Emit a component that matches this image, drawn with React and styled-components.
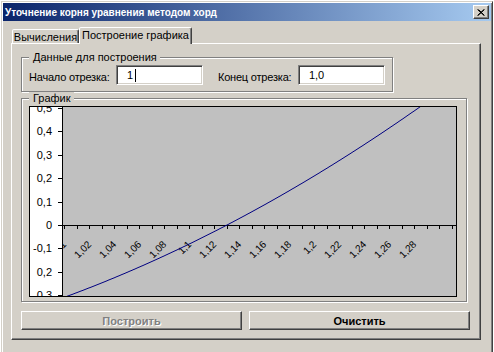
import React from "react";
import styled, { createGlobalStyle } from "styled-components";

const GlobalStyle = createGlobalStyle`
  html, body {
    margin: 0;
    padding: 0;
    background: #ffffff;
    overflow: hidden;
    font-family: "Liberation Sans", Arial, sans-serif;
    font-size: 11px;
  }
`;

const Window = styled.div`
  margin: 1px 0 0 1px;
  width: 492px;
  height: 351px;
  box-sizing: border-box;
  background: #d4d0c8;
  border: 1px solid;
  border-bottom: none;
  border-color: #d4d0c8 #404040 #404040 #d4d0c8;
  box-shadow: inset 1px 1px 0 #fff, inset -1px 0 0 #808080;
  padding: 1px 1px 0 1px;
  display: flex;
  flex-direction: column;
`;

const TitleBar = styled.div`
  height: 18px;
  display: flex;
  align-items: center;
  padding: 0 2px 0 2px;
  background: linear-gradient(to right, #0a246a, #a6caf0);
  color: #fff;
  font-weight: bold;
  font-size: 10px;
`;

const TitleText = styled.span`
  flex: 1;
  white-space: nowrap;
`;

const CloseButton = styled.div`
  width: 16px;
  height: 14px;
  box-sizing: border-box;
  background: #d4d0c8;
  border: 1px solid;
  border-color: #fff #404040 #404040 #fff;
  box-shadow: inset -1px -1px 0 #808080;
  display: flex;
  align-items: center;
  justify-content: center;
`;

const Body = styled.div`
  padding: 6px 0 0 8px;
`;

const TabRow = styled.div`
  display: flex;
  align-items: flex-end;
  height: 16px;
  padding-left: 1px;
`;

const Tab = styled.div`
  position: relative;
  z-index: ${p => (p.$active ? 2 : 1)};
  width: ${p => p.$w}px;
  height: ${p => (p.$active ? 17 : 14)}px;
  margin-bottom: ${p => (p.$active ? -1 : 0)}px;
  box-sizing: border-box;
  background: #d4d0c8;
  border: 1px solid;
  border-bottom: none;
  border-color: #fff #404040 transparent #fff;
  border-radius: 2px 2px 0 0;
  box-shadow: inset -1px 0 0 #808080;
  display: flex;
  align-items: center;
  justify-content: center;
  padding-bottom: ${p => (p.$active ? 3 : 0)}px;
  color: #000;
  white-space: nowrap;
`;

const Panel = styled.div`
  width: 470px;
  height: 297px;
  box-sizing: border-box;
  border: 1px solid;
  border-color: #fff #404040 #404040 #fff;
  box-shadow: inset -1px -1px 0 #808080;
  padding: 13px 0 0 9px;
  display: flex;
  flex-direction: column;
`;

const Group = styled.div`
  width: ${p => p.$w}px;
  height: ${p => p.$h}px;
  margin-top: ${p => p.$mt || 0}px;
  box-sizing: border-box;
  border: 1px solid #808080;
  box-shadow: inset 1px 1px 0 #fff, 1px 1px 0 #fff;
  padding: 0 7px;
  display: flex;
  flex-direction: column;
`;

const Legend = styled.span`
  align-self: flex-start;
  margin-top: -7px;
  padding: 0 3px 0 4px;
  line-height: 13px;
  background: #d4d0c8;
  color: #000;
`;

const FieldRow = styled.div`
  display: flex;
  align-items: center;
  height: 20px;
  margin-top: 1px;
`;

const FieldLabel = styled.span`
  width: ${p => p.$w}px;
  padding-top: 3px;
  white-space: nowrap;
  letter-spacing: -0.2px;
`;

const Field = styled.div`
  width: 88px;
  height: 20px;
  box-sizing: border-box;
  margin-right: ${p => p.$mr || 0}px;
  background: #fff;
  border: 1px solid;
  border-color: #808080 #fff #fff #808080;
  box-shadow: inset 1px 1px 0 #404040, inset -1px -1px 0 #d4d0c8;
  padding: 0 0 0 10px;
  display: flex;
  align-items: center;
`;

const Caret = styled.span`
  width: 1px;
  height: 13px;
  margin-left: 2px;
  background: #000;
`;

const ChartBox = styled.div`
  margin-top: 1px;
  width: 428px;
  height: 191px;
`;

const ButtonRow = styled.div`
  display: flex;
  gap: 7px;
  margin-top: 9px;
`;

const Button = styled.div`
  width: 221px;
  height: 19px;
  box-sizing: border-box;
  background: #d4d0c8;
  border: 1px solid;
  border-color: #fff #404040 #404040 #fff;
  box-shadow: inset -1px -1px 0 #808080;
  display: flex;
  align-items: center;
  justify-content: center;
  font-weight: bold;
  color: ${p => (p.$disabled ? "#808080" : "#000")};
  text-shadow: ${p => (p.$disabled ? "1px 1px 0 #fff" : "none")};
`;

const yTicks = [
  [0.5, "0,5"],
  [0.4, "0,4"],
  [0.3, "0,3"],
  [0.2, "0,2"],
  [0.1, "0,1"],
  [0, "0"],
  [-0.1, "-0,1"],
  [-0.2, "0,2"],
  [-0.3, "0,3"],
];

function Chart() {
  const axisY = 119;
  const xOf = v => 35 + (v - 1) * 1250;
  const yOf = y => axisY - y * 234;

  // кривая f(x) около корня
  const pts = [];
  for (let sx = 34; sx <= 427; sx++) {
    const d = 1 + (sx - 35) / 1250 - 1.1304;
    const y = 2.784 * d + 3.148 * d * d;
    pts.push(`${sx},${yOf(y).toFixed(1)}`);
  }

  const ticks = [];
  for (let k = 0; k <= 31; k++) ticks.push(35 + k * 12.5);

  const labels = [];
  for (let k = 0; k <= 14; k++) {
    const v = 1 + 0.02 * k;
    const txt = String(parseFloat(v.toFixed(2))).replace(".", ",");
    labels.push({ x: xOf(v), txt });
  }

  return (
    <svg width="428" height="191" viewBox="0 0 428 191">
      <defs>
        <clipPath id="plot">
          <rect x="34" y="1" width="393" height="189" />
        </clipPath>
      </defs>
      <rect x="0.5" y="0.5" width="427" height="190" fill="#fff" stroke="#000" />
      <rect x="34" y="1" width="393" height="189" fill="#c0c0c0" />
      <line x1="33.5" y1="1" x2="33.5" y2="190" stroke="#000" />

      {yTicks.map(([v, t]) => (
        <g key={t + v}>
          <line x1="29" y1={Math.round(yOf(v)) + 0.5} x2="33" y2={Math.round(yOf(v)) + 0.5} stroke="#000" />
          <text
            x="23"
            y={yOf(v) + 4}
            textAnchor="end"
            fontFamily="Liberation Sans, Arial, sans-serif"
            fontSize="11"
            fill="#000"
          >
            {t}
          </text>
        </g>
      ))}

      <g clipPath="url(#plot)">
        <line x1="34" y1={axisY + 0.5} x2="427" y2={axisY + 0.5} stroke="#000" />
        {ticks.map(x => (
          <line key={x} x1={Math.round(x) + 0.5} y1={axisY} x2={Math.round(x) + 0.5} y2={axisY + 4} stroke="#000" />
        ))}
        {labels.map(l => (
          <text
            key={l.txt}
            transform={`translate(${l.x + 3}, ${axisY + 20}) rotate(-45)`}
            textAnchor="end"
            fontFamily="Liberation Sans, Arial, sans-serif"
            fontSize="10"
            fill="#000"
          >
            {l.txt}
          </text>
        ))}
        <polyline points={pts.join(" ")} fill="none" stroke="#000080" strokeWidth="1" />
      </g>
    </svg>
  );
}

export default function App() {
  return (
    <>
      <GlobalStyle />
      <Window>
        <TitleBar>
          <TitleText>Уточнение корня уравнения методом хорд</TitleText>
          <CloseButton>
            <svg width="8" height="7" viewBox="0 0 8 7">
              <path d="M0.5 0.5 L7 6.5 M1.5 0.5 L7.5 6.5 M7 0.5 L0.5 6.5 M7.5 0.5 L1 6.5" stroke="#000" strokeWidth="1" />
            </svg>
          </CloseButton>
        </TitleBar>

        <Body>
          <TabRow>
            <Tab $w={67}>Вычисления</Tab>
            <Tab $w={113} $active>Построение графика</Tab>
          </TabRow>

          <Panel>
            <Group $w={372} $h={35}>
              <Legend>Данные для построения</Legend>
              <FieldRow>
                <FieldLabel $w={88}>Начало отрезка:</FieldLabel>
                <Field $mr={15}>
                  1<Caret />
                </Field>
                <FieldLabel $w={81}>Конец отрезка:</FieldLabel>
                <Field>1,0</Field>
              </FieldRow>
            </Group>

            <Group $w={446} $h={204} $mt={6}>
              <Legend>График</Legend>
              <ChartBox>
                <Chart />
              </ChartBox>
            </Group>

            <ButtonRow>
              <Button $disabled>Построить</Button>
              <Button>Очистить</Button>
            </ButtonRow>
          </Panel>
        </Body>
      </Window>
    </>
  );
}
